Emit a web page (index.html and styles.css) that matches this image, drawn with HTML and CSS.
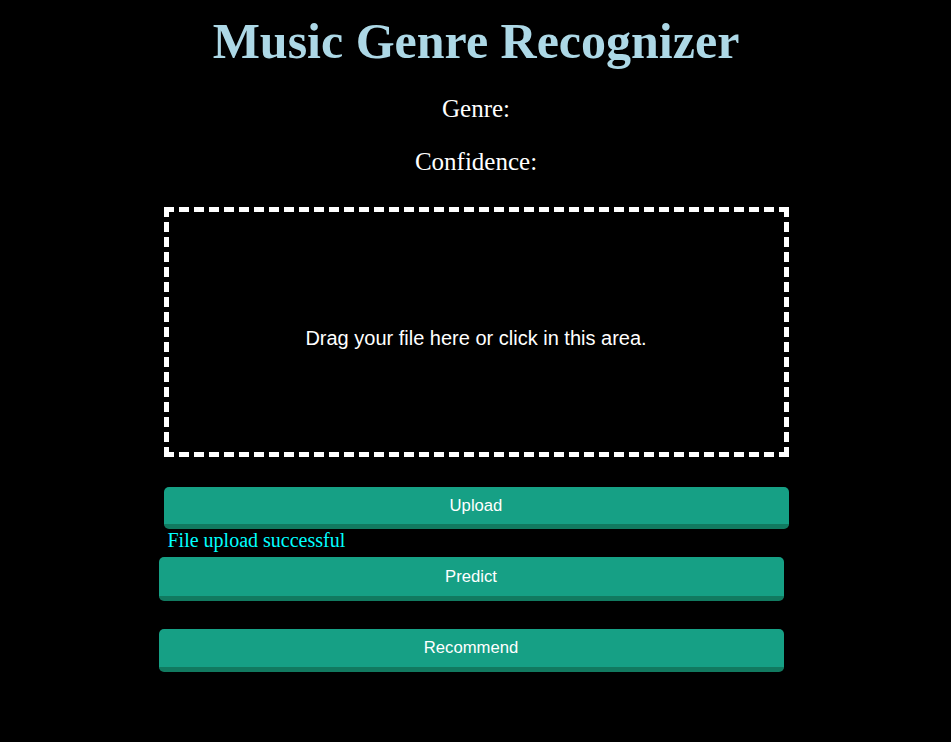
FILE: index.html
```
<!DOCTYPE html>
<html>
<head lang="en">
    <meta charset="UTF-8">
    <title>Music Genre Recognizer</title>
    <link rel="stylesheet" href="styles.css">
</head>
<body>
    <h1 class="title">Music Genre Recognizer</h1>
    <p class="result">Genre:</p>
    <p class="result">Confidence:</p>
    <div class="panel">
        <form class="drop" action="#">
            <input type="file" class="drop-input">
            <p class="drop-text">Drag your file here or click in this area.</p>
        </form>
        <button class="btn btn-upload" type="button">Upload</button>
        <p class="status">File upload successful</p>
        <button class="btn btn-shift" type="button">Predict</button>
        <button class="btn btn-shift btn-last" type="button">Recommend</button>
    </div>
</body>
</html>
```

FILE: styles.css
```
*{
    margin: 0;
    padding: 0;
    box-sizing: border-box;
}
body{
    padding-left: 1px;
    background: #000;
    color: #fff;
    font-family: "Liberation Serif", "Times New Roman", serif;
}
.title{
    margin: 12px 0 0;
    text-align: center;
    font-size: 50px;
    font-weight: bold;
    color: #add8e6;
}
.result{
    margin: 25px 0;
    text-align: center;
    font-size: 25px;
}
.panel{
    width: 625px;
    margin: 31px auto 0;
    padding-bottom: 40px;
}
.drop{
    position: relative;
    display: flex;
    align-items: center;
    justify-content: center;
    height: 250px;
    padding-top: 12px;
    border: 5px dashed #fff;
}
.drop-input{
    position: absolute;
    top: 0;
    left: 0;
    width: 100%;
    height: 100%;
    opacity: 0;
}
.drop-text{
    font-family: "Liberation Sans", Arial, sans-serif;
    font-size: 20px;
    line-height: 23px;
    color: #fff;
}
.btn{
    display: block;
    width: 625px;
    height: 42px;
    color: #fff;
    background: #16a085;
    border: none;
    border-bottom: 5px solid #117a60;
    border-radius: 5px;
    font-family: "Liberation Sans", Arial, sans-serif;
    font-size: 16.67px;
    outline: none;
}
.btn-upload{
    margin-top: 30px;
}
.status{
    padding-left: 4px;
    font-size: 20px;
    line-height: 23px;
    color: #00ffff;
}
.btn-shift{
    margin: 5px 0 0 -5px;
    height: 44px;
}
.btn-last{
    margin-top: 28px;
    height: 43px;
}
```
